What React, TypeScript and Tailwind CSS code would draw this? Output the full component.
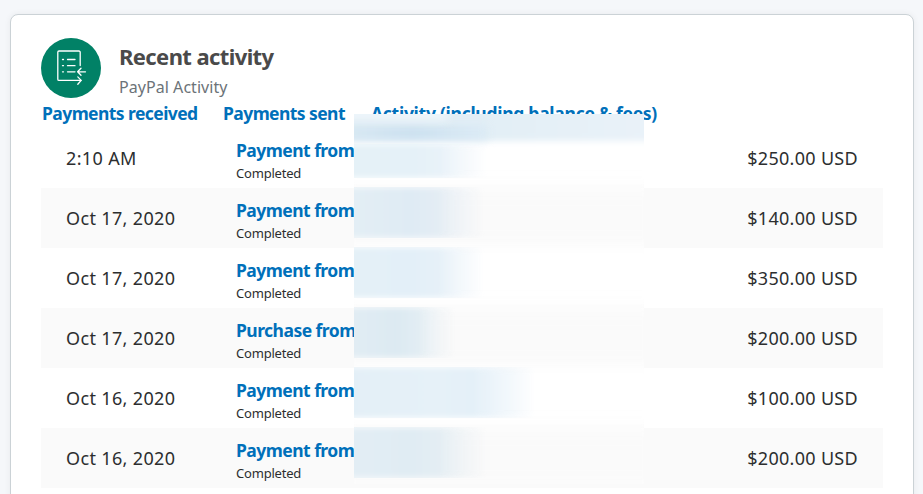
import React from 'react';

interface Activity {
  date: string;
  title: string;
  amount: string;
  smudge: string;
}

const activities: Activity[] = [
  { date: '2:10 AM', title: 'Payment from', amount: '$250.00 USD', smudge: 'w-[150px] from-[#e5f1f7] via-[#e5f1f8] to-[#eef4fa]' },
  { date: 'Oct 17, 2020', title: 'Payment from', amount: '$140.00 USD', smudge: 'w-[147px] from-[#e4eff5] via-[#dfebf4] to-[#ecf0f5]' },
  { date: 'Oct 17, 2020', title: 'Payment from', amount: '$350.00 USD', smudge: 'w-[147px] from-[#e5f1f7] via-[#e3eff8] to-[#ebf3f9]' },
  { date: 'Oct 17, 2020', title: 'Purchase from', amount: '$200.00 USD', smudge: 'w-[118px] from-[#e3edf4] via-[#dceaf2] to-[#edf2f5]' },
  { date: 'Oct 16, 2020', title: 'Payment from', amount: '$100.00 USD', smudge: 'w-[198px] from-[#e3eff7] via-[#e6f1f8] to-[#e1eef8]' },
  { date: 'Oct 16, 2020', title: 'Payment from', amount: '$200.00 USD', smudge: 'w-[149px] from-[#e3eef5] via-[#e0ecf3] to-[#ebf0f3]' },
];

function ActivityIcon() {
  return (
    <svg width="60" height="60" viewBox="0 0 60 60" fill="none" stroke="#fff" strokeWidth="1.3" strokeLinecap="round" strokeLinejoin="round">
      <circle cx="30" cy="30" r="30" fill="#018166" stroke="none" />
      <path d="M39.2 27.5V14.2a1.2 1.2 0 0 0-1.2-1.2H18a1.2 1.2 0 0 0-1.2 1.2v27a1.2 1.2 0 0 0 1.2 1.2h22" />
      <path d="M21.5 21.5h1M26.5 21.5h7.5M21.5 27.7h1M26.5 27.7h7.5M21.5 33.8h1M26.5 33.8h7.5" />
      <path d="M44.5 33.8H36.8M40 30.3l-3.4 3.5 3.4 3.5M36.8 38.9l3.4 3.5-3.4 3.8" />
    </svg>
  );
}

function Row({ item }: { item: Activity }) {
  return (
    <li className="flex h-[60px] items-center pl-[25px] pr-[25px] even:bg-[#fafafa]">
      <span className="w-[170px] whitespace-nowrap text-[18px] leading-6 tracking-[0.35px] text-[#2c2e2f]">{item.date}</span>
      <div className="flex grow flex-col pt-[6px]">
        <a href="#" className="text-[17.5px] font-bold leading-6 tracking-[-0.53px] text-[#0070ba]">{item.title}</a>
        <span className="text-[13px] leading-[22px] tracking-[-0.2px] text-[#2c2e2f]">Completed</span>
      </div>
      <span className="whitespace-nowrap text-[18px] leading-6 tracking-[0.3px] text-[#2c2e2f]">{item.amount}</span>
    </li>
  );
}

function Redaction() {
  return (
    <div className="absolute left-[343px] top-[99px] h-[370px] w-[290px] overflow-hidden bg-[#fdfdfd]">
      <div className="absolute inset-x-0 top-[14px] flex flex-col">
        {activities.map((_, i) => (
          <div key={i} className="-mx-4 h-[60px] shrink-0 bg-white blur-[8px] even:bg-[#fafafa]" />
        ))}
      </div>
      <div className="absolute -inset-x-4 -top-4 h-[43px] bg-linear-to-r from-[#dfecf5] via-[#e3eff6] to-[#eaf2f9] blur-[3px]" />
      <div className="absolute -left-4 top-[12px] h-[14px] w-[150px] bg-linear-to-r from-[#d9e9f3] via-[#cbe0f0] to-[#dcebf5] blur-[4px]" />
      <div className="absolute -top-2 -left-4 h-[15px] w-[110px] bg-[#edf5fa] blur-[4px]" />
      <div className="absolute -left-4 top-[13px] flex flex-col gap-[9px]">
        {activities.map((item, i) => (
          <div key={i} className="h-[51px] first:mt-[17px] first:h-[34px]">
            <div className={`h-full bg-linear-to-r mask-r-from-68% mask-r-to-100% blur-[3px] ${item.smudge}`} />
          </div>
        ))}
      </div>
    </div>
  );
}

export default function App() {
  return (
    <div className="h-[494px] overflow-hidden bg-[#f5f7fa] pl-[10px] pr-[9px] pt-[14px] font-['Noto_Sans','Open_Sans',sans-serif]">
      <section className="relative h-[520px] rounded-[8px] border border-[#cbd2d6] bg-white px-[30px] pt-[23px] shadow-[0_0_6px_rgba(0,0,0,0.06)]">
        <header className="flex h-[60px] gap-[18px]">
          <ActivityIcon />
          <div className="pt-[3px]">
            <h2 className="text-[22px] font-bold leading-[30px] tracking-[-0.6px] text-[#4a4a4a]">Recent activity</h2>
            <p className="pt-px text-[16px] leading-[30px] tracking-[0.05px] text-[#6c7378]">PayPal Activity</p>
          </div>
        </header>
        <nav className="flex h-[30px] whitespace-nowrap pl-px pt-[3px] text-[17.5px] font-bold leading-6 tracking-[-0.57px] text-[#0070ba]">
          <a href="#" className="w-[181px]">Payments received</a>
          <a href="#" className="w-[148px]">Payments sent</a>
          <a href="#" className="tracking-[-0.27px]">Activity (including balance &amp; fees)</a>
        </nav>
        <ul>
          {activities.map((item, i) => (
            <Row key={i} item={item} />
          ))}
        </ul>
        <Redaction />
      </section>
    </div>
  );
}
